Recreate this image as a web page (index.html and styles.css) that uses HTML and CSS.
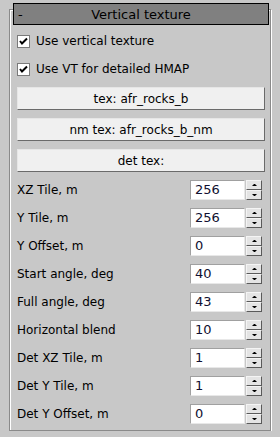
FILE: index.html
```html
<!DOCTYPE html>
<html>
<head>
    <title>Vertical texture</title>
    <link rel="stylesheet" href="styles.css">
</head>
<body>
    <div class="rollout">
        <div class="rollout-title">
            <span class="collapse">-</span>
            <span class="title-text">Vertical texture</span>
            <span></span>
        </div>
        <div class="rollout-body">
            <div class="check-row">
                <span class="checkbox"><svg width="11" height="11" viewBox="0 0 11 11"><path d="M2 5 L4 7.5 L9 2.5" fill="none" stroke="#000" stroke-width="2"/></svg></span>
                <span>Use vertical texture</span>
            </div>
            <div class="check-row">
                <span class="checkbox"><svg width="11" height="11" viewBox="0 0 11 11"><path d="M2 5 L4 7.5 L9 2.5" fill="none" stroke="#000" stroke-width="2"/></svg></span>
                <span>Use VT for detailed HMAP</span>
            </div>

            <button class="map-button">tex: afr_rocks_b</button>
            <button class="map-button">nm tex: afr_rocks_b_nm</button>
            <button class="map-button">det tex:</button>

            <div class="spin-row">
                <span class="spin-label">XZ Tile, m</span>
                <span class="spin-input">256</span>
                <span class="spinner"><span class="spin-btn"><i class="arrow-up"></i></span><span class="spin-btn"><i class="arrow-down"></i></span></span>
            </div>
            <div class="spin-row">
                <span class="spin-label">Y Tile, m</span>
                <span class="spin-input">256</span>
                <span class="spinner"><span class="spin-btn"><i class="arrow-up"></i></span><span class="spin-btn"><i class="arrow-down"></i></span></span>
            </div>
            <div class="spin-row">
                <span class="spin-label">Y Offset, m</span>
                <span class="spin-input">0</span>
                <span class="spinner"><span class="spin-btn"><i class="arrow-up"></i></span><span class="spin-btn"><i class="arrow-down"></i></span></span>
            </div>
            <div class="spin-row">
                <span class="spin-label">Start angle, deg</span>
                <span class="spin-input">40</span>
                <span class="spinner"><span class="spin-btn"><i class="arrow-up"></i></span><span class="spin-btn"><i class="arrow-down"></i></span></span>
            </div>
            <div class="spin-row">
                <span class="spin-label">Full angle, deg</span>
                <span class="spin-input">43</span>
                <span class="spinner"><span class="spin-btn"><i class="arrow-up"></i></span><span class="spin-btn"><i class="arrow-down"></i></span></span>
            </div>
            <div class="spin-row">
                <span class="spin-label">Horizontal blend</span>
                <span class="spin-input">10</span>
                <span class="spinner"><span class="spin-btn"><i class="arrow-up"></i></span><span class="spin-btn"><i class="arrow-down"></i></span></span>
            </div>
            <div class="spin-row">
                <span class="spin-label">Det XZ Tile, m</span>
                <span class="spin-input">1</span>
                <span class="spinner"><span class="spin-btn"><i class="arrow-up"></i></span><span class="spin-btn"><i class="arrow-down"></i></span></span>
            </div>
            <div class="spin-row">
                <span class="spin-label">Det Y Tile, m</span>
                <span class="spin-input">1</span>
                <span class="spinner"><span class="spin-btn"><i class="arrow-up"></i></span><span class="spin-btn"><i class="arrow-down"></i></span></span>
            </div>
            <div class="spin-row">
                <span class="spin-label">Det Y Offset, m</span>
                <span class="spin-input">0</span>
                <span class="spinner"><span class="spin-btn"><i class="arrow-up"></i></span><span class="spin-btn"><i class="arrow-down"></i></span></span>
            </div>
        </div>
    </div>
</body>
</html>
```

FILE: styles.css
```css
body {
    background-color: #c8c8c8;
    color: #000000;
    font-family: "DejaVu Sans", Verdana, sans-serif;
    font-size: 12px;
    margin: 0;
    padding: 0;
}

.rollout {
    padding-top: 3px;
}

.rollout-title {
    position: relative; /* sits over the groove line */
    z-index: 1;
    display: grid;
    grid-template-columns: 20px 1fr 20px;
    align-items: center;
    height: 22px;
    box-sizing: border-box;
    margin: 0 11px 0 13px;
    border: 1px solid #000000;
    background-color: #808080;
    font-size: 13px;
}

.collapse {
    padding-left: 4px;
}

.title-text {
    text-align: center;
}

.rollout-body {
    display: flex;
    flex-direction: column;
    gap: 8px;
    height: 422px;
    box-sizing: border-box;
    margin: -16px 9px 0 9px;
    padding: 21px 5px 0 7px;
    border: 1px solid #8a8a8a;
    box-shadow: inset 1px 1px 0 #ffffff, 1px 1px 0 #ffffff;
}

.check-row {
    display: flex;
    align-items: center;
    height: 20px;
}

.checkbox {
    display: flex;
    align-items: center;
    justify-content: center;
    width: 13px;
    height: 13px;
    box-sizing: border-box;
    margin-right: 6px;
    border: 1px solid #7a7a7a;
    background-color: #ffffff;
}

.map-button {
    height: 23px;
    margin: 0;
    padding: 0;
    font-family: inherit;
    font-size: 12px;
    color: #000000;
    background-color: #f0f0f0;
    border: 1px solid;
    border-color: #e6e6e6 #6a6a6a #6a6a6a #e6e6e6;
}

.spin-row {
    display: flex;
    align-items: center;
    height: 20px;
}

.spin-label {
    flex: 1;
}

.spin-input {
    width: 55px;
    height: 20px;
    box-sizing: border-box;
    padding-left: 4px;
    line-height: 18px;
    font-size: 13px;
    color: #101030;
    background-color: #ffffff;
    border: 1px solid;
    border-color: #a0a0a0 #e8e8e8 #e8e8e8 #a0a0a0;
}

.spinner {
    display: flex;
    flex-direction: column;
    width: 16px;
    height: 20px;
    margin: 0 3px 0 1px;
}

.spin-btn {
    display: flex;
    align-items: center;
    justify-content: center;
    height: 10px;
    box-sizing: border-box;
    background-color: #e4e4e4;
    border: 1px solid;
    border-color: #f4f4f4 #5a5a5a #5a5a5a #f4f4f4;
}

.arrow-up {
    width: 1px;
    border-left: 2px solid transparent;
    border-right: 2px solid transparent;
    border-bottom: 2px solid #000000;
}

.arrow-down {
    width: 1px;
    border-left: 2px solid transparent;
    border-right: 2px solid transparent;
    border-top: 2px solid #000000;
}
```
